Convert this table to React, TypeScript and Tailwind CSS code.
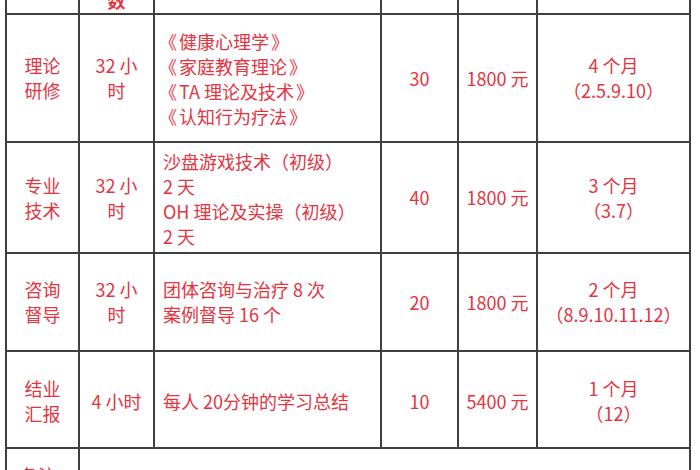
import React from "react";

const cell = "border-r-2 border-b-2 border-[#3f3f3f] flex items-center justify-center text-center";
const red = "text-[#e3343f]";

function B({ children }: { children: React.ReactNode }) {
  return (
    <>
      <span className="mr-[2px]">《</span>
      {children}
      <span className="ml-[2px]">》</span>
    </>
  );
}

export default function App() {
  return (
    <div
      lang="zh-CN"
      className="w-[700px] h-[470px] overflow-hidden bg-white [text-spacing-trim:space-all]"
      style={{ fontFamily: '"Noto Sans CJK SC", "Noto Sans", sans-serif' }}
    >
      <div className="ml-[5px] -mt-[25px] w-[686px] border-l-2 border-[#3f3f3f] grid grid-cols-[73px_75px_227px_77px_79px_153px] grid-rows-[40px_128px_111px_98px_97px_60px] text-[18px] leading-[25px]">
        {/* header */}
        <div className={`${cell} !items-end pb-[12px] font-bold text-[#999]`}>课程</div>
        <div className={`${cell} !items-end pb-0 font-bold ${red}`}>
          <div>
            课时
            <br />数
          </div>
        </div>
        <div className={`${cell} !items-end pb-[12px] font-bold text-[#999]`}>课程内容</div>
        <div className={`${cell} !items-end pb-[12px] font-bold text-[#999]`}>人数</div>
        <div className={`${cell} !items-end pb-[12px] font-bold text-[#999]`}>费用</div>
        <div className={`${cell} !items-end pb-[12px] font-bold text-[#999]`}>时间</div>

        {/* row 1 */}
        <div className={`${cell} ${red}`}>
          <div>
            理论
            <br />
            研修
          </div>
        </div>
        <div className={`${cell} ${red}`}>
          <div>
            32 小
            <br />时
          </div>
        </div>
        <div className={`${cell} !justify-start !text-left pl-[4px] pt-[2px] ${red} whitespace-nowrap`}>
          <div>
            <B>健康心理学</B>
            <br />
            <B>家庭教育理论</B>
            <br />
            <B>TA 理论及技术</B>
            <br />
            <B>认知行为疗法</B>
          </div>
        </div>
        <div className={`${cell} ${red}`}>30</div>
        <div className={`${cell} ${red}`}>1800 元</div>
        <div className={`${cell} ${red}`}>
          <div>
            4 个月
            <br />
            （2.5.9.10）
          </div>
        </div>

        {/* row 2 */}
        <div className={`${cell} ${red}`}>
          <div>
            专业
            <br />
            技术
          </div>
        </div>
        <div className={`${cell} ${red}`}>
          <div>
            32 小
            <br />时
          </div>
        </div>
        <div className={`${cell} !justify-start !text-left pl-[8px] pt-[3px] ${red} whitespace-nowrap overflow-hidden`}>
          <div>
            沙盘游戏技术（初级）
            <br />2 天
            <br />
            OH 理论及实操（初级）
            <br />2 天
          </div>
        </div>
        <div className={`${cell} ${red}`}>40</div>
        <div className={`${cell} ${red}`}>1800 元</div>
        <div className={`${cell} ${red}`}>
          <div>
            3 个月
            <br />
            （3.7）
          </div>
        </div>

        {/* row 3 */}
        <div className={`${cell} ${red}`}>
          <div>
            咨询
            <br />
            督导
          </div>
        </div>
        <div className={`${cell} ${red}`}>
          <div>
            32 小
            <br />时
          </div>
        </div>
        <div className={`${cell} !justify-start !text-left pl-[8px] ${red}`}>
          <div>
            团体咨询与治疗 8 次
            <br />
            案例督导 16 个
          </div>
        </div>
        <div className={`${cell} ${red}`}>20</div>
        <div className={`${cell} ${red}`}>1800 元</div>
        <div className={`${cell} ${red}`}>
          <div>
            2 个月
            <br />
            （8.9.10.11.12）
          </div>
        </div>

        {/* row 4 */}
        <div className={`${cell} pt-[3px] ${red}`}>
          <div>
            结业
            <br />
            汇报
          </div>
        </div>
        <div className={`${cell} pt-[3px] ${red}`}>4 小时</div>
        <div className={`${cell} !justify-start !text-left pl-[8px] pt-[3px] ${red}`}>每人 20分钟的学习总结</div>
        <div className={`${cell} pt-[3px] ${red}`}>10</div>
        <div className={`${cell} pt-[3px] ${red}`}>5400 元</div>
        <div className={`${cell} pt-[3px] ${red}`}>
          <div>
            1 个月
            <br />
            （12）
          </div>
        </div>

        {/* last row */}
        <div className={`${cell} !items-start !justify-start pl-[13px] pt-[14px] ${red}`}>备注</div>
        <div className={`${cell} col-span-5`}></div>
      </div>
    </div>
  );
}
